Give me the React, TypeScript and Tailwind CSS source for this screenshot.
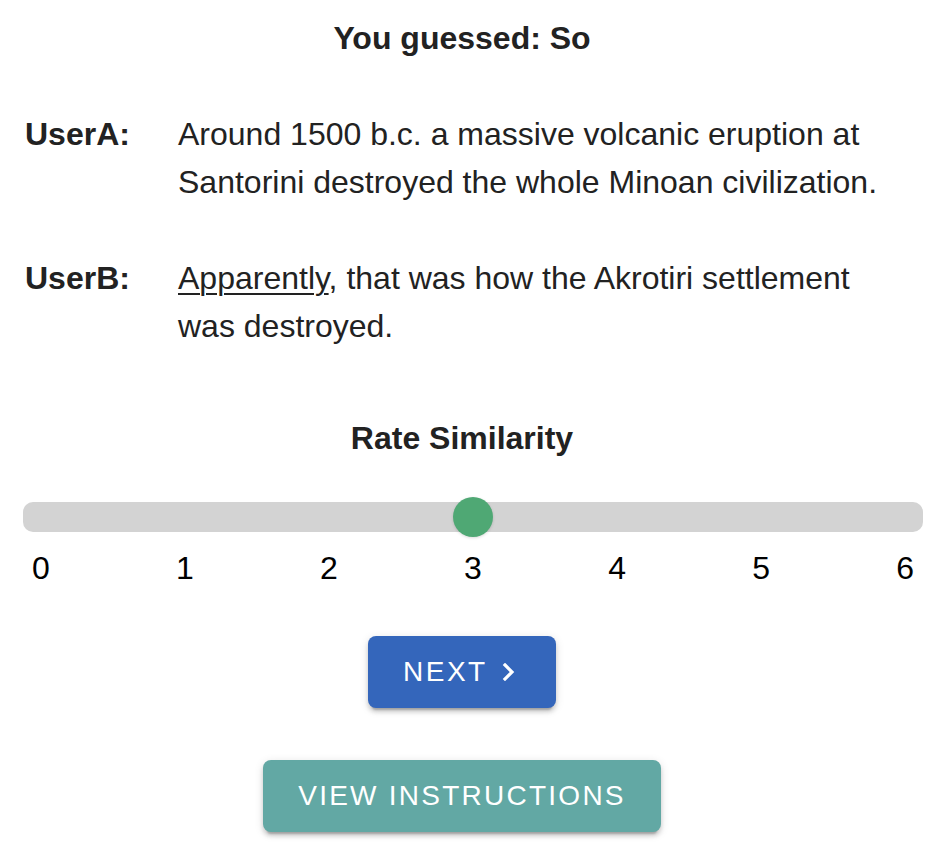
import React from 'react';

const font = { fontFamily: '"Liberation Sans", Arial, Helvetica, sans-serif' };

function Chevron() {
  return (
    <svg width="14" height="18" viewBox="0 0 14 18" fill="none" className="ml-[14px]">
      <path d="M3 2 L10 9 L3 16" stroke="white" strokeWidth="3.2" strokeLinecap="square" />
    </svg>
  );
}

export default function App() {
  const ticks = [0, 1, 2, 3, 4, 5, 6];
  const value = 3;

  return (
    <div className="w-[944px] h-[854px] bg-white text-[#222222] overflow-hidden" style={font}>
      {/* Guess header */}
      <div className="pt-[14px] pr-[20px] text-center text-[32px] leading-[48px] font-bold">
        You guessed: So
      </div>

      {/* Dialogue */}
      <div className="mt-[48px] pl-[25px] text-[32px] leading-[48px]">
        <div className="flex">
          <div className="w-[153px] shrink-0 font-bold">UserA:</div>
          <div className="w-[715px]">
            Around 1500 b.c. a massive volcanic eruption at Santorini destroyed the whole Minoan civilization.
          </div>
        </div>
        <div className="flex mt-[48px]">
          <div className="w-[153px] shrink-0 font-bold">UserB:</div>
          <p className="w-[715px]">
            <u className="underline-offset-[4px] decoration-[2px]">Apparently</u>, that was how the Akrotiri settlement was destroyed.
          </p>
        </div>
      </div>

      {/* Rating */}
      <div className="mt-[64px] pr-[20px] text-center text-[32px] leading-[48px] font-bold">
        Rate Similarity
      </div>

      <div className="mt-[40px] pl-[23px] pr-[21px]">
        <div className="relative h-[30px] rounded-[10px] bg-[#d3d3d3]">
          <div
            className="absolute top-1/2 w-[40px] h-[40px] -translate-x-1/2 -translate-y-1/2 rounded-full bg-[#4fa874] shadow-[0_1px_3px_rgba(0,0,0,0.15)]"
            style={{ left: `${(value / 6) * 100}%` }}
          />
        </div>
        <div className="mt-[12px] pl-[9px] pr-[9px] flex justify-between text-[32px] leading-[48px] text-black">
          {ticks.map(t => (
            <span key={t}>{t}</span>
          ))}
        </div>
      </div>

      {/* Actions */}
      <div className="mt-[44px] pr-[20px] flex flex-col items-center">
        <button className="h-[72px] w-[188px] pl-[35px] flex items-center rounded-[8px] bg-[#3466bb] text-white text-[28px] tracking-[2.5px] shadow-[0_6px_2px_-4px_rgba(0,0,0,0.2),0_4px_4px_0_rgba(0,0,0,0.14),0_2px_10px_0_rgba(0,0,0,0.12)]">
          NEXT
          <Chevron />
        </button>
        <button className="mt-[52px] h-[72px] px-[35px] flex items-center rounded-[8px] bg-[#62a8a4] text-white text-[28px] tracking-[2.25px] shadow-[0_6px_2px_-4px_rgba(0,0,0,0.2),0_4px_4px_0_rgba(0,0,0,0.14),0_2px_10px_0_rgba(0,0,0,0.12)]">
          VIEW INSTRUCTIONS
        </button>
      </div>
    </div>
  );
}
